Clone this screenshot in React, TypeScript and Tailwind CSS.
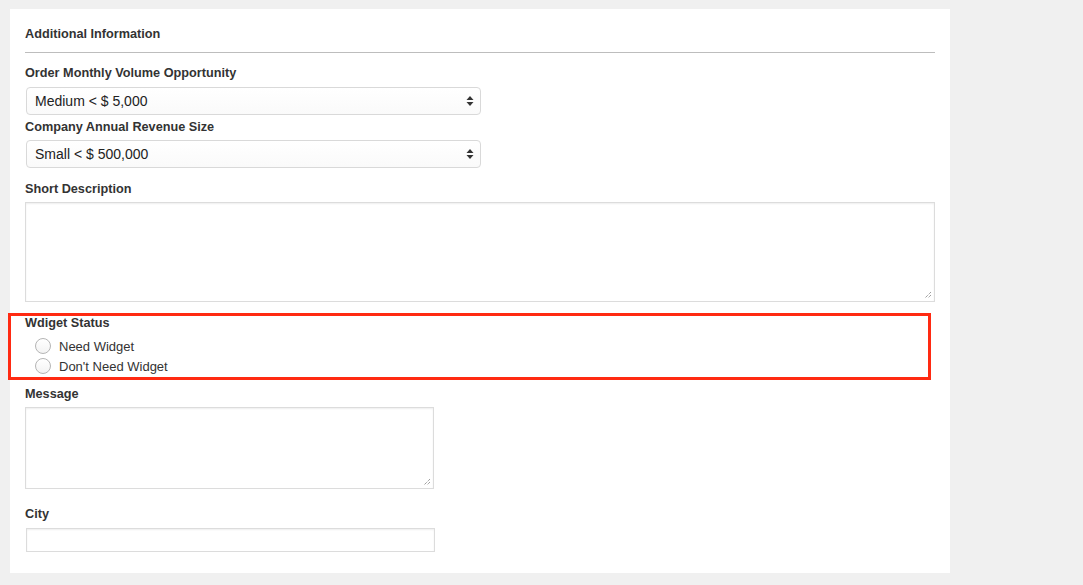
import React from "react";

const font = { fontFamily: '"Liberation Sans", Arial, sans-serif' };

function Label({ children }: { children: React.ReactNode }) {
  return (
    <div className="text-[12.7px] leading-[18px] font-bold text-[#333] translate-y-px">{children}</div>
  );
}

function Select({ value }: { value: string }) {
  return (
    <div className="ml-px w-[455px] h-[28px] rounded-[4px] border border-[#d9d9d9] bg-gradient-to-b from-white to-[#fafafa] flex items-center justify-between pl-[8px] pr-[6px]">
      <span className="text-[14px] text-[#222]">{value}</span>
      <svg width="8" height="12" viewBox="0 0 8 12" className="text-[#333]">
        <path d="M4 1 L7.5 5 L0.5 5 Z" fill="currentColor" />
        <path d="M4 11 L7.5 7 L0.5 7 Z" fill="currentColor" />
      </svg>
    </div>
  );
}

function Resize() {
  return (
    <svg width="8" height="8" viewBox="0 0 8 8" className="absolute right-[2px] bottom-[2px]">
      <path d="M7 1 L1 7 M7 4 L4 7" stroke="#777" strokeWidth="1" strokeDasharray="1 1" />
    </svg>
  );
}

function TextArea({ w, h }: { w: string; h: string }) {
  return (
    <div className={`relative ${w} ${h} border border-[#dcdcdc] shadow-[inset_0_1px_2px_rgba(0,0,0,0.07)] bg-white`}>
      <Resize />
    </div>
  );
}

function Radio({ label }: { label: string }) {
  return (
    <div className="flex items-center h-[20px] pl-[10px]">
      <span className="w-[16px] h-[16px] rounded-full border border-[#b5b5b5] bg-gradient-to-b from-white to-[#f3f3f3] shrink-0" />
      <span className="ml-[8px] text-[13px] text-[#333] translate-y-px">{label}</span>
    </div>
  );
}

export default function App() {
  return (
    <div className="min-h-[585px] bg-[#f0f0f0] pt-[9px] pl-[10px]" style={font}>
      <div className="w-[940px] bg-white px-[15px] pt-[15px] pb-[21px]">
        <Label>Additional Information</Label>
        <div className="mt-[10px] h-px bg-[#bdbdbd]" />
        <div className="mt-[10px]">
          <Label>Order Monthly Volume Opportunity</Label>
          <div className="mt-[6px]">
            <Select value="Medium < $ 5,000" />
          </div>
        </div>
        <div className="mt-[2px]">
          <Label>Company Annual Revenue Size</Label>
          <div className="mt-[5px]">
            <Select value="Small < $ 500,000" />
          </div>
        </div>
        <div className="mt-[11px]">
          <Label>Short Description</Label>
          <div className="mt-[5px]">
            <TextArea w="w-[910px]" h="h-[100px]" />
          </div>
        </div>
        <div className="relative mt-[11px]">
          <Label>Wdiget Status</Label>
          <div className="mt-[5px]">
            <Radio label="Need Widget" />
            <Radio label="Don't Need Widget" />
          </div>
          <div className="absolute -left-[17px] top-0 right-[4px] -bottom-[4px] border-[3px] border-[#ff2a12] pointer-events-none" />
        </div>
        <div className="mt-[8px]">
          <Label>Message</Label>
          <div className="mt-[5px]">
            <TextArea w="w-[409px]" h="h-[82px]" />
          </div>
        </div>
        <div className="mt-[15px]">
          <Label>City</Label>
          <div className="mt-[6px] ml-px w-[409px] h-[24px] border border-[#dcdcdc] shadow-[inset_0_1px_2px_rgba(0,0,0,0.07)] bg-white" />
        </div>
      </div>
    </div>
  );
}
